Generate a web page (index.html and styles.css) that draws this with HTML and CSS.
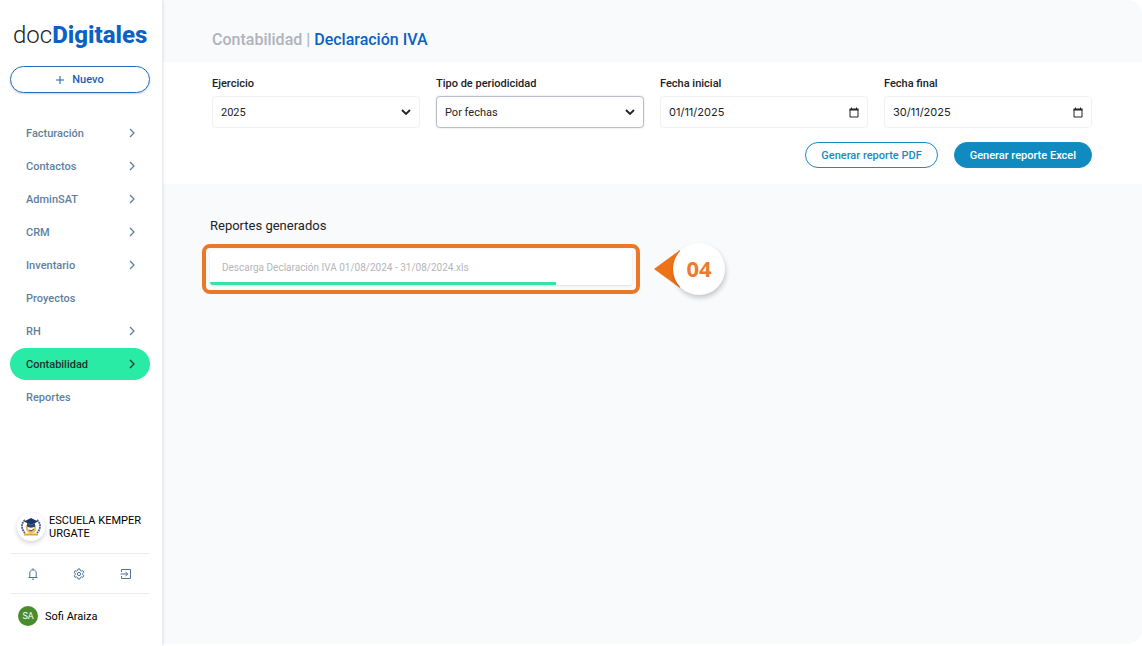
FILE: index.html
```html
<!DOCTYPE html>
<html lang="es">
  <head>
    <meta charset="utf-8">
    <meta name="viewport" content="width=device-width, initial-scale=1">
    <title>Declaración IVA</title>
    <link rel="stylesheet" href="styles.css">
  </head>
  <body>
    <svg class="defs" aria-hidden="true">
      <symbol id="chevron" viewBox="0 0 8 10"><path d="M2 1l4 4-4 4" fill="none" stroke="currentColor" stroke-width="1.3"/></symbol>
      <symbol id="arrow-down" viewBox="0 0 10 6"><path d="M1 1l4 4 4-4" fill="none" stroke="currentColor" stroke-width="1.8"/></symbol>
      <symbol id="calendar" viewBox="0 0 10 11"><path d="M1 2.5h8v7.500H1z" fill="none" stroke="currentColor"/><path d="M.5 1.500h9v2h-9zM2 .5h1v2H2zM7 .5h1v2H7z" fill="currentColor"/></symbol>
    </svg>

    <div class="layout">
      <aside class="sidebar">
        <a class="logo" href="#"><span class="logo-light">doc</span><span class="logo-bold">Digitales</span></a>
        <button class="new-button" type="button">
          <svg width="8" height="8" viewBox="0 0 8 8" aria-hidden="true"><path d="M4 0v8M0 4h8" stroke="currentColor"/></svg>
          Nuevo
        </button>

        <nav class="menu">
          <a href="#">Facturación <svg class="chevron"><use href="#chevron"/></svg></a>
          <a href="#">Contactos <svg class="chevron"><use href="#chevron"/></svg></a>
          <a href="#">AdminSAT <svg class="chevron"><use href="#chevron"/></svg></a>
          <a href="#">CRM <svg class="chevron"><use href="#chevron"/></svg></a>
          <a href="#">Inventario <svg class="chevron"><use href="#chevron"/></svg></a>
          <a href="#">Proyectos</a>
          <a href="#">RH <svg class="chevron"><use href="#chevron"/></svg></a>
          <a class="active" href="#">Contabilidad <svg class="chevron"><use href="#chevron"/></svg></a>
          <a href="#">Reportes</a>
        </nav>

        <div class="company">
          <span class="company-logo">
            <svg width="20" height="20" viewBox="0 0 20 20" aria-hidden="true">
              <path d="M4 3C0 6 0 12 4 16M16 3c4 3 4 9 0 13" fill="none" stroke="#52628c" stroke-width="1.8" stroke-dasharray="2 .6"/>
              <path d="M5 8v4c0 3 3 4 5 4.500 2-.5 5-1.500 5-4.500V8z" fill="#f2bd42"/>
              <path d="M7 9h6v3c-2 2-4 2-6 0z" fill="#fff"/>
              <path d="M10 1l7 3.500L10 8 3 4.500z" fill="#1d3566"/>
              <path d="M6 6v3.500c2 1.500 6 1.500 8 0V6l-4 2z" fill="#294579"/>
              <path d="M8 13l2 1 3-2" fill="none" stroke="#34497c"/>
              <path d="M3 16.500h14v2H3z" fill="#e3a04a"/>
            </svg>
          </span>
          <span>ESCUELA KEMPER URGATE</span>
        </div>

        <div class="tools">
          <button type="button" aria-label="Notificaciones">
            <svg width="10" height="12" viewBox="0 0 10 12"><path d="M.5 9.500h9M1.800 9.500V5C1.800 3 3 1.800 5 1.800S8.200 3 8.200 5v4.500M5 .3v1.500M4 11.200h2" fill="none" stroke="currentColor"/></svg>
          </button>
          <button type="button" aria-label="Configuración">
            <svg width="12" height="12" viewBox="0 0 24 24"><path d="M10 2h4l.6 3 2.200 1.300 2.900-1 2 3.500L19.400 10.800v2.400l2.300 2-2 3.500-2.900-1-2.200 1.300-.6 3h-4l-.6-3-2.200-1.300-2.900 1-2-3.500 2.300-2v-2.400l-2.300-2 2-3.500 2.900 1L9.400 5z" fill="none" stroke="currentColor" stroke-width="2"/><circle cx="12" cy="12" r="3.200" fill="none" stroke="currentColor" stroke-width="2"/></svg>
          </button>
          <button type="button" aria-label="Salir">
            <svg width="12" height="12" viewBox="0 0 12 12"><path d="M1.500 4V1.500h9v9h-9V8M.5 6h7M5.500 3.800L7.700 6 5.500 8.200" fill="none" stroke="currentColor"/></svg>
          </button>
        </div>

        <div class="user">
          <span class="avatar">SA</span>
          <span>Sofi Araiza</span>
        </div>
      </aside>

      <main class="content">
        <h1 class="title"><span class="section">Contabilidad |</span> Declaración IVA</h1>

        <form class="filters">
          <div class="fields">
            <div class="field">
              <label for="ejercicio">Ejercicio</label>
              <div class="control">
                <select id="ejercicio"><option>2025</option></select>
                <svg class="arrow" aria-hidden="true"><use href="#arrow-down"/></svg>
              </div>
            </div>
            <div class="field">
              <label for="periodicidad">Tipo de periodicidad</label>
              <div class="control selected">
                <select id="periodicidad"><option>Por fechas</option></select>
                <svg class="arrow" aria-hidden="true"><use href="#arrow-down"/></svg>
              </div>
            </div>
            <div class="field">
              <label for="inicial">Fecha inicial</label>
              <div class="control">
                <input id="inicial" type="text" value="01/11/2025">
                <svg class="calendar" aria-hidden="true"><use href="#calendar"/></svg>
              </div>
            </div>
            <div class="field">
              <label for="final">Fecha final</label>
              <div class="control">
                <input id="final" type="text" value="30/11/2025">
                <svg class="calendar" aria-hidden="true"><use href="#calendar"/></svg>
              </div>
            </div>
          </div>
          <div class="actions">
            <button class="button" type="button">Generar reporte PDF</button>
            <button class="button primary" type="button">Generar reporte Excel</button>
          </div>
        </form>

        <section class="reports">
          <h2>Reportes generados</h2>
          <div class="report-row">
            <div class="highlight">
              <div class="report">
                <label for="descarga">Descarga Declaración IVA 01/08/2024 - 31/08/2024.xls</label>
                <progress id="descarga" value="82" max="100"></progress>
              </div>
            </div>
            <div class="step">
              <svg width="26" height="38" viewBox="0 0 26 38" aria-hidden="true"><path d="M0 19L26 0v38z" fill="#ee7218"/></svg>
              <span class="step-number">04</span>
            </div>
          </div>
        </section>
      </main>
    </div>
  </body>
</html>
```

FILE: styles.css
```css
* { box-sizing: border-box; }
body { margin: 0; background: #fff; color: #202327; font-family: Roboto, "Liberation Sans", sans-serif; font-size: 11px; }
a { color: inherit; text-decoration: none; }
button, input, select { font: inherit; color: inherit; }
button { cursor: pointer; }
.defs { display: none; }

.layout { display: flex; min-height: 100vh; }

/* sidebar */
.sidebar { display: flex; flex-direction: column; flex: 0 0 162px; min-width: 0; padding: 20px 12px 20px 10px; background: #fff; box-shadow: 0 0 4px rgba(30, 60, 60, .2); z-index: 1; }
.logo { padding-left: 3px; font-size: 24px; line-height: 30px; white-space: nowrap; }
.logo-light { color: #222; font-weight: 300; }
.logo-bold { color: #0b62c4; font-weight: 800; }
.new-button { display: flex; align-items: center; justify-content: center; gap: 8px; height: 27px; margin-top: 16px; border: 1px solid #2a6cb8; border-radius: 14px; background: #fff; color: #1660b8; font-weight: 500; box-shadow: 0 1px 2px rgba(20, 80, 150, .25); padding: 0; }

.menu { display: flex; flex-direction: column; gap: 1px; margin-top: 24px; color: #5f7f9f; font-weight: 500; }
.menu a { display: flex; align-items: center; justify-content: space-between; height: 32px; padding: 0 14px 0 16px; border-radius: 16px; }
.menu .active { background: #2aeba5; color: #17362f; }
.chevron { width: 8px; height: 10px; }

.company { display: flex; align-items: center; gap: 4px; margin-top: auto; padding: 0 6px 12px 7px; color: #000; line-height: 13px; }
.company-logo { display: flex; align-items: center; justify-content: center; flex: 0 0 28px; height: 28px; border-radius: 50%; background: #fff; box-shadow: 0 2px 5px rgba(0, 0, 0, .18); }
.tools { display: flex; justify-content: space-around; height: 41px; border-top: 1px solid #ececee; border-bottom: 1px solid #ececee; }
.tools button { display: flex; align-items: center; padding: 0; border: 0; background: none; color: #4c7399; }
.user { display: flex; align-items: center; gap: 7px; padding: 12px 0 0 8px; color: #000; }
.avatar { width: 20px; height: 20px; border-radius: 50%; background: #4b8b2b; color: #fff; font-size: 9px; line-height: 20px; text-align: center; }

/* content */
.content { flex: 1; min-width: 0; margin-bottom: 2px; border-radius: 0 14px 14px 0; background: #f8fafc; overflow: hidden; }
.title { margin: 0; padding: 28px 50px 10px; color: #0b62c4; font-size: 16px; font-weight: 500; line-height: 24px; }
.section { color: #b0b3bc; }

.filters { padding: 14px 50px 16px; background: #fff; }
.fields { display: grid; grid-template-columns: repeat(4, 1fr); gap: 16px; }
.field label { display: block; margin-bottom: 4px; line-height: 16px; font-weight: 500; }
.control { position: relative; height: 32px; border: 1px solid #f0f0f2; border-radius: 4px; background: #fff; }
.control.selected { border-color: #b9bccb; box-shadow: 0 0 2px rgba(90, 100, 150, .25); }
.control select, .control input { width: 100%; height: 100%; padding: 0 28px 0 8px; border: 0; background: none; appearance: none; outline: 0; }
.control input { font-family: Inter, sans-serif; }
.control svg { position: absolute; right: 8px; pointer-events: none; }
.arrow { top: 12px; width: 10px; height: 6px; }
.calendar { top: 10px; width: 10px; height: 11px; }

.actions { display: flex; justify-content: flex-end; gap: 16px; margin-top: 14px; }
.button { height: 26px; padding: 0 15px; border: 1px solid #168cc0; border-radius: 13px; background: #fff; color: #168cc0; font-weight: 500; }
.button.primary { background: #118bbf; color: #fff; }

.reports { padding: 32px 40px; }
.reports h2 { margin: 0 0 7px 8px; font-size: 13px; font-weight: 400; line-height: 20px; }
.report-row { display: flex; align-items: center; gap: 14px; }
.highlight { flex: 0 1 438px; padding: 2px 4px 5px; border: 4px solid #e97928; border-radius: 8px; }
.report { overflow: hidden; border-radius: 3px; background: #fff; box-shadow: 0 1px 2px rgba(0, 0, 0, .1); }
.report label { display: block; padding: 9px 12px 6px; color: #b4b6b9; font-size: 10px; line-height: 17px; }
progress { display: block; width: 100%; height: 3px; border: 0; appearance: none; background: #fff; }
progress::-webkit-progress-bar { background: #fff; }
progress::-webkit-progress-value { background: #38e2a6; }

.step { display: flex; align-items: center; }
.step-number { width: 52px; height: 52px; margin-left: -7px; border-radius: 50%; background: #fff; color: #ee7b2c; font: bold 22px/50px "Noto Sans", sans-serif; text-align: center; box-shadow: 1px 3px 5px rgba(0, 0, 0, .2); }
```
